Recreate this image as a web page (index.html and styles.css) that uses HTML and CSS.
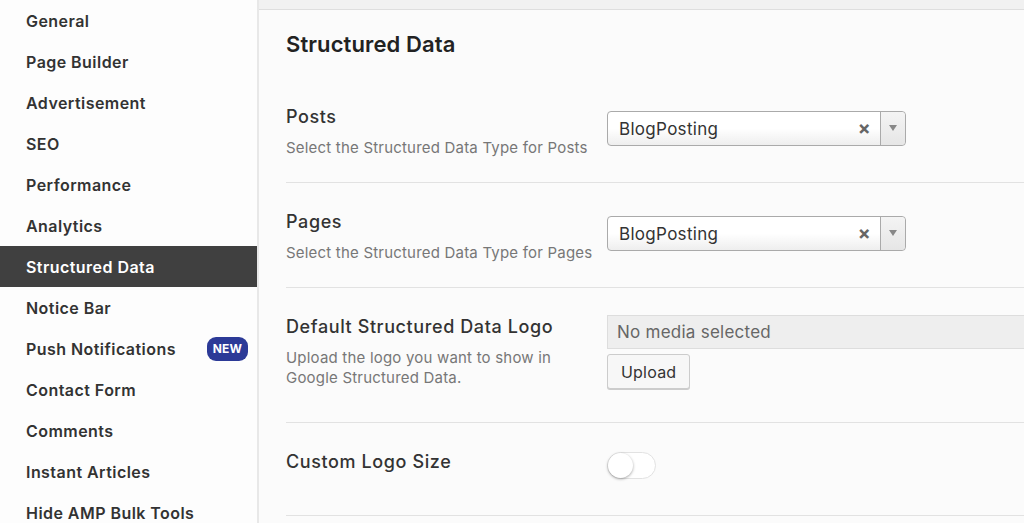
FILE: index.html
```html
<!DOCTYPE html>
<html lang="en">
<head>
    <meta charset="UTF-8">
    <title>Settings - Structured Data</title>
    <link rel="stylesheet" href="styles.css">
</head>
<body>
    <div class="panel">
        <ul class="menu">
            <li class="item">General</li>
            <li class="item">Page Builder</li>
            <li class="item">Advertisement</li>
            <li class="item">SEO</li>
            <li class="item">Performance</li>
            <li class="item">Analytics</li>
            <li class="item active">Structured Data</li>
            <li class="item">Notice Bar</li>
            <li class="item">Push Notifications <span class="badge">NEW</span></li>
            <li class="item">Contact Form</li>
            <li class="item">Comments</li>
            <li class="item">Instant Articles</li>
            <li class="item">Hide AMP Bulk Tools</li>
        </ul>

        <div class="main">
            <div class="topbar"></div>
            <div class="content">
                <h2 class="title">Structured Data</h2>

                <div class="row">
                    <div class="label">
                        <h3>Posts</h3>
                        <p>Select the Structured Data Type for Posts</p>
                    </div>
                    <div class="field">
                        <div class="select">
                            <span class="value">BlogPosting</span>
                            <span class="clear">&times;</span>
                            <span class="arrow"></span>
                        </div>
                    </div>
                </div>

                <div class="row">
                    <div class="label">
                        <h3>Pages</h3>
                        <p>Select the Structured Data Type for Pages</p>
                    </div>
                    <div class="field">
                        <div class="select">
                            <span class="value">BlogPosting</span>
                            <span class="clear">&times;</span>
                            <span class="arrow"></span>
                        </div>
                    </div>
                </div>

                <div class="row row-logo">
                    <div class="label">
                        <h3>Default Structured Data Logo</h3>
                        <p>Upload the logo you want to show in<br>Google Structured Data.</p>
                    </div>
                    <div class="field field-media">
                        <div class="media">No media selected</div>
                        <button class="upload">Upload</button>
                    </div>
                </div>

                <div class="row row-toggle">
                    <div class="label">
                        <h3>Custom Logo Size</h3>
                    </div>
                    <div class="field field-toggle">
                        <span class="toggle"><span class="knob"></span></span>
                    </div>
                </div>
            </div>
        </div>
    </div>
</body>
</html>
```

FILE: styles.css
```css
html, body {
    margin: 0;
    height: 100%;
}
body {
    font-family: Inter, "Open Sans", "Liberation Sans", sans-serif;
    background: #fbfbfb;
    color: #333;
    overflow: hidden;
}
.panel {
    display: flex;
    height: 523px;
}
.menu {
    list-style: none;
    margin: 0;
    padding: 0;
    width: 257px;
    flex: none;
    background: #fdfdfd;
    border-right: 2px solid #e8e8e8;
}
.item {
    height: 41px;
    display: flex;
    align-items: center;
    padding: 0 9px 0 26px;
    font-size: 16px;
    font-weight: 600;
    color: #333;
    letter-spacing: 0.45px;
}
.item.active {
    background: #404040;
    color: #fff;
}
.badge {
    margin-left: auto;
    background: #2c3a97;
    color: #fff;
    font-size: 12px;
    font-weight: 700;
    letter-spacing: 0.1px;
    border-radius: 9px;
    padding: 4px 6px 5px;
    line-height: 15px;
}
.main {
    flex: 1;
    min-width: 0;
}
.topbar {
    height: 9px;
    background: #f1f1f1;
    border-bottom: 1px solid #dedede;
}
.content {
    padding-left: 27px;
}
.title {
    margin: 20px 0 20px;
    font-size: 22px;
    line-height: 28px;
    font-weight: 600;
    letter-spacing: 0.1px;
    color: #222;
}
.row {
    display: flex;
    align-items: flex-start;
    padding: 28px 0 24px;
    border-bottom: 1px solid #e2e2e2;
}
.label {
    width: 321px;
    flex: none;
}
.label h3 {
    margin: 0;
    font-size: 18px;
    line-height: 22px;
    font-weight: 500;
    letter-spacing: 0.6px;
    color: #333;
}
.label p {
    margin: 10px 0 0;
    font-size: 15px;
    line-height: 20px;
    letter-spacing: 0.2px;
    color: #777;
}
.field {
    flex: 1;
    padding-top: 5px;
}
.select {
    width: 299px;
    height: 35px;
    box-sizing: border-box;
    border: 1px solid #aaa;
    border-radius: 4px;
    background: linear-gradient(#fff 50%, #eee);
    display: flex;
    align-items: center;
    font-size: 17px;
    letter-spacing: 0.3px;
}
.value {
    flex: 1;
    padding-left: 11px;
    color: #333;
}
.clear {
    font-size: 19px;
    font-weight: 700;
    color: #666;
    margin-right: 9px;
}
.arrow {
    width: 24px;
    height: 100%;
    border-left: 1px solid #aaa;
    position: relative;
    background: linear-gradient(#f4f4f4, #e6e6e6);
    border-radius: 0 4px 4px 0;
}
.arrow::after {
    content: "";
    position: absolute;
    left: 8px;
    top: 13px;
    border-left: 4px solid transparent;
    border-right: 4px solid transparent;
    border-top: 6px solid #888;
}
.row-logo {
    padding-bottom: 33px;
}
.field-media {
    padding-top: 0;
    margin-top: -1px;
}
.media {
    height: 34px;
    box-sizing: border-box;
    background: #eee;
    border: 1px solid #ddd;
    border-right: none;
    font-size: 17px;
    line-height: 32px;
    letter-spacing: 0.25px;
    padding-left: 9px;
    color: #666;
}
.upload {
    margin-top: 5px;
    height: 35px;
    padding: 0 13px;
    font-family: inherit;
    font-size: 16px;
    letter-spacing: 0.2px;
    color: #333;
    background: #f7f7f7;
    border: 1px solid #ccc;
    border-radius: 3px;
    box-shadow: 0 1px 0 #ccc;
}
.row-toggle {
    padding-bottom: 36px;
}
.field-toggle {
    padding-top: 1px;
}
.toggle {
    display: block;
    width: 49px;
    height: 27px;
    box-sizing: border-box;
    border: 1px solid #e2e2e2;
    border-radius: 14px;
    background: #fff;
    position: relative;
}
.knob {
    position: absolute;
    left: 0;
    top: 0;
    width: 25px;
    height: 25px;
    border-radius: 50%;
    background: #fff;
    box-shadow: 0 1px 3px rgba(0, 0, 0, 0.35);
}
```
